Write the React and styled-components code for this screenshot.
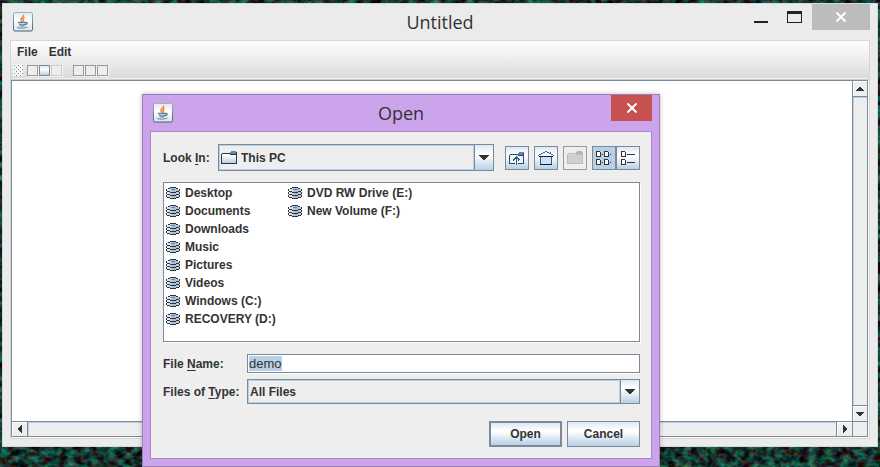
import React, { useEffect, useRef } from "react";
import styled, { createGlobalStyle, css } from "styled-components";

const line = "#7a8a99";
const paleBlue = "#b8cfe5";
const metal = "#eeeeee";
const steel = "linear-gradient(#dde8f3 0%, #ffffff 35%, #ffffff 40%, #b8cfe5 100%)";

const GlobalStyle = createGlobalStyle`
  *, *::before, *::after { box-sizing: border-box; }
  body { margin: 0; background: #12302a; overflow: hidden; }
  button, input, select, textarea { font: inherit; color: inherit; margin: 0; padding: 0; border: 0; border-radius: 0; outline: none; }
  svg { flex: none; }
`;

const Desktop = styled.main`
  position: relative;
  display: flex;
  min-height: 100vh;
  padding: 3px 2px 20px;
  font: bold 12px/18px "Liberation Sans", Arial, sans-serif;
  color: #333333;
`;

const Wallpaper = styled.svg`
  position: absolute;
  inset: 0;
  width: 100%;
  height: 100%;
`;

const AppWindow = styled.section`
  position: relative;
  flex: 1;
  display: flex;
  flex-direction: column;
  padding: 0 7px 7px;
  background: #ebebeb;
  border: 1px solid #d6d6d6;
`;

const DialogWindow = styled.section`
  position: absolute;
  top: 94px;
  left: 142px;
  right: 220px;
  padding: 0 7px 7px;
  background: #cba4ec;
  border: 1px solid #9d7cb9;
  box-shadow: 0 0 5px rgba(0, 0, 0, 0.25);
`;

const TitleBar = styled.header`
  display: grid;
  grid-template-columns: 1fr auto 1fr;
  height: 36px;
`;

const TitleIcon = styled.div`
  display: flex;
  align-items: center;
  padding-left: 3px;
`;

const Title = styled.h1`
  margin: 0;
  font: 400 18px/36px "Open Sans", "Noto Sans", sans-serif;
  color: #333333;
`;

const WindowControls = styled.div`
  display: flex;
  justify-content: flex-end;
  align-items: flex-start;
`;

const CaptionButton = styled.button`
  display: flex;
  align-items: center;
  justify-content: center;
  width: ${(p) => p.$width}px;
  height: 26px;
  background: ${(p) => p.$bg || "transparent"};
`;

const AppContent = styled.div`
  flex: 1;
  display: flex;
  flex-direction: column;
  border: 1px solid #d5d5d5;
  background: #ffffff;
`;

const Bars = styled.div`
  height: 39px;
  background: linear-gradient(#ffffff, #dadada);
  border-bottom: 1px solid #cccccc;
  box-shadow: inset 0 -1px #eeeeee;
`;

const MenuBar = styled.nav`
  display: flex;
  gap: 11px;
  height: 23px;
  padding: 0 6px;
`;

const MenuButton = styled.button`
  background: none;
  height: 22px;
`;

const ToolBar = styled.div`
  display: flex;
  align-items: center;
  gap: 1px;
  padding-left: 2px;
`;

const Grip = styled.svg`
  width: 10px;
  height: 12px;
  margin-right: 3px;
`;

const ToolButton = styled.button`
  width: 11px;
  height: 11px;
  border: 1px solid ${(p) => (p.$active ? line : p.disabled ? "#cccccc" : "#999999")};
  background: ${(p) => (p.$active ? steel : metal)};
  box-shadow: 1px 1px #f4f4f4;
`;

const ToolSeparator = styled.span`
  width: 9px;
`;

const ScrollPane = styled.div`
  flex: 1;
  display: grid;
  grid-template-columns: 1fr 15px;
  grid-template-rows: 1fr 15px;
  margin: 0 1px 1px 0;
  border: 1px solid ${line};
`;

const Editor = styled.textarea`
  width: 100%;
  height: 100%;
  resize: none;
  background: #ffffff;
`;

const ScrollBar = styled.div`
  display: flex;
  background: ${metal};
  ${(p) =>
    p.$vertical
      ? css`flex-direction: column; border-left: 1px solid ${line};`
      : css`border-top: 1px solid ${line};`}
`;

const ScrollThumb = styled.div`
  flex: 1;
  border: 0 solid ${line};
  box-shadow: inset 1px 1px ${paleBlue};
  border-width: ${(p) => (p.$vertical ? "1px 0" : "0 1px")};
`;

const ScrollButton = styled.button`
  display: flex;
  align-items: center;
  justify-content: center;
  width: ${(p) => (p.$vertical ? "14px" : "15px")};
  height: ${(p) => (p.$vertical ? "15px" : "14px")};
  background: ${metal};
  box-shadow: inset 1px 1px #ffffff;
`;

const ScrollCorner = styled.div`
  background: ${metal};
  border-top: 1px solid ${line};
  border-left: 1px solid ${line};
`;

const Chooser = styled.form`
  padding: 12px 11px 11px 12px;
  background: ${metal};
  border: 1px solid #ab86cb;
`;

const LookRow = styled.div`
  display: grid;
  grid-template-columns: 55px 1fr auto;
  align-items: center;
  margin-bottom: 11px;
`;

const Mnemonic = styled.span`
  text-decoration: underline;
  text-underline-offset: 2px;
`;

const Combo = styled.div`
  display: flex;
  align-items: center;
  height: ${(p) => p.$height}px;
  border: 1px solid ${line};
  box-shadow: inset 1px 1px ${paleBlue}, inset 0 -1px ${paleBlue};
`;

const ComboIcon = styled.span`
  display: flex;
  margin-left: 2px;
`;

const ComboSelect = styled.select`
  flex: 1;
  min-width: 0;
  height: 18px;
  padding-left: ${(p) => (p.$wide ? "4px" : "2px")};
  appearance: none;
  background: transparent;
`;

const ComboArrow = styled.span`
  display: flex;
  align-items: center;
  justify-content: center;
  align-self: stretch;
  width: 19px;
  background: ${steel};
  border-left: 1px solid ${line};
  box-shadow: -1px 0 ${paleBlue};
  pointer-events: none;
`;

const Tools = styled.div`
  display: flex;
  gap: 5px;
  margin-left: 11px;
`;

const ToggleGroup = styled.div`
  display: flex;
`;

const IconButton = styled.button`
  display: flex;
  align-items: center;
  justify-content: center;
  width: 24px;
  height: 24px;
  border: 1px solid ${(p) => (p.disabled ? "#999999" : line)};
  background: ${(p) => (p.disabled ? metal : p.$pressed ? paleBlue : steel)};
`;

const FileList = styled.ul`
  display: grid;
  grid-auto-flow: column;
  grid-template-rows: repeat(8, 18px);
  grid-auto-columns: 122px;
  height: 160px;
  margin: 0 0 12px;
  padding: 1px 2px;
  list-style: none;
  background: #ffffff;
  border: 1px solid ${line};
  box-shadow: 1px 1px #ffffff;
`;

const FileItem = styled.li`
  display: flex;
  align-items: center;
  gap: 5px;
  white-space: nowrap;
`;

const FieldRow = styled.div`
  display: grid;
  grid-template-columns: 84px 1fr;
  align-items: center;
  margin-bottom: ${(p) => p.$gap}px;
`;

const NameInput = styled.input`
  width: 100%;
  height: 19px;
  padding: 0 1px;
  font-weight: 400;
  font-size: 13px;
  line-height: 15px;
  background: #ffffff;
  border: 1px solid ${line};
  box-shadow: 0 1px #ffffff;
  &::selection { background: ${paleBlue}; color: #333333; }
`;

const Actions = styled.div`
  display: flex;
  justify-content: flex-end;
  gap: 5px;
`;

const ActionButton = styled.button`
  width: 73px;
  height: 26px;
  background: ${steel};
  border: ${(p) => (p.$primary ? 2 : 1)}px solid ${line};
`;

const JavaIcon = () => (
  <svg width="20" height="20" viewBox="0 0 20 20" aria-hidden="true">
    <defs>
      <linearGradient id="tile" x2="0" y2="1">
        <stop offset="0" stopColor="#e3e9ee" />
        <stop offset="0.4" stopColor="#ffffff" />
        <stop offset="1" stopColor="#dce3e8" />
      </linearGradient>
      <linearGradient id="edge" x2="0" y2="1">
        <stop offset="0" stopColor="#9db3c2" />
        <stop offset="1" stopColor="#3f6274" />
      </linearGradient>
    </defs>
    <rect x="0.5" y="0.5" width="19" height="18.5" rx="1.5" fill="url(#tile)" stroke="url(#edge)" />
    <g fill="none" strokeLinecap="round">
      <path d="M10.500 3.500c1 1.500-3 2.500-2.500 4 .3.800 1 1 1 1.700" stroke="#ee8135" strokeWidth="1.700" />
      <path d="M11.500 6c-1.500.6-1.800 1.200-1 2 .3.400 0 .8-.3 1.200" stroke="#ee8135" strokeWidth="1.200" />
      <path d="M5.500 10.500h7M6.500 12.300c1 .6 4 .6 5.500 0M12.800 10.500c2.400-.3 1.400 1.800-.6 2.200" stroke="#5382a1" strokeWidth="1.300" />
      <path d="M7 14h4M4.500 15c-2 1.300 6 1.700 9.500.2" stroke="#5382a1" strokeWidth="1" />
    </g>
  </svg>
);

const DriveIcon = () => (
  <svg width="14" height="12" viewBox="0 0 14 12" shapeRendering="crispEdges" aria-hidden="true">
    <defs>
      <linearGradient id="disk">
        <stop offset="0" stopColor="#ffffff" />
        <stop offset="0.55" stopColor="#a3b8cc" />
        <stop offset="1" stopColor="#c6d8ea" />
      </linearGradient>
    </defs>
    <path d="M4 0h6v1h2v1h2v8h-2v1h-2v1H4v-1H2v-1H0V2h2V1h2z" fill="url(#disk)" />
    <path d="M4 0h6v1H4zM2 1h2v1H2zM10 1h2v1h-2zM0 2h1v2H0zM13 2h1v2h-1zM1 4h3v1H1zM10 4h3v1h-3zM4 5h6v1H4zM0 5h1v2H0zM13 5h1v2h-1zM1 7h3v1H1zM10 7h3v1h-3zM4 8h6v1H4zM0 8h1v2H0zM13 8h1v2h-1zM1 10h3v1H1zM10 10h3v1h-3zM4 11h6v1H4z" fill="#2d3338" />
    <path d="M5 2h4v1H5z" fill="#6382bf" />
  </svg>
);

const FolderIcon = ({ muted }) => (
  <svg width="16" height="14" viewBox="0 0 16 14" shapeRendering="crispEdges" aria-hidden="true">
    <defs>
      <linearGradient id="folder" x2="0" y2="1">
        <stop offset="0" stopColor="#ffffff" />
        <stop offset="1" stopColor="#b8cfe5" />
      </linearGradient>
    </defs>
    <path d="M1 4h14v8H1z" fill={muted ? "#d0d0d0" : "url(#folder)"} />
    <path d="M1 2h8v1H1zM0 3h1v9H0zM9 3h6v1H9zM15 1h1v11h-1zM0 12h16v1H0z" fill={muted ? "#bbbbbb" : "#333333"} />
    <path d="M1 3h8v1H1z" fill={muted ? "#d8d8d8" : "#ffffff"} />
    <path d="M10 0h5v1h-5zM9 1h6v2H9z" fill={muted ? "#b5b5b5" : "#6382bf"} />
  </svg>
);

const UpFolderIcon = () => (
  <svg width="16" height="14" viewBox="0 0 16 14" shapeRendering="crispEdges" aria-hidden="true">
    <path d="M1 3h13v9H1z" fill="#eef4fa" />
    <path d="M1 3h8v1H1zM0 4h1v8H0zM9 4h5v1H9zM14 2h1v10h-1zM0 12h6v1H0zM9 12h6v1H9z" fill="#2d4a66" />
    <path d="M10 1h5v1h-5zM9 2h5v2H9z" fill="#6382bf" />
    <path d="M7 7h1v6H7z" fill="#4b8db0" />
    <path d="M7 5h1v1h1v1h1v1h1v1h-1v1H9V8H8v6H7V8H6v1H5v1H4V8h1V7h1V6h1z" fill="#25607e" />
  </svg>
);

const HomeIcon = () => (
  <svg width="16" height="14" viewBox="0 0 16 14" shapeRendering="crispEdges" aria-hidden="true">
    <path d="M7 1h2v1h2v1h2v1h2v1H1V4h2V3h2V2h2z" fill="#ffffff" />
    <path d="M7 0h2v1H7zM5 1h2v1H5zM9 1h2v1H9zM3 2h2v1H3zM11 2h1v1h-1zM12 1h1v2h-1zM1 3h2v1H1zM13 3h2v1h-2zM0 4h1v1H0zM15 4h1v1h-1z" fill="#336f96" />
    <path d="M3 6h10v7H3z" fill="#cfdff5" />
    <path d="M2 6h1v7H2zM13 6h1v7h-1z" fill="#28648a" />
    <path d="M1 5h14v1H1zM2 13h12v1H2z" fill="#111d35" />
  </svg>
);

const ListIcon = () => (
  <svg width="16" height="14" viewBox="0 0 16 14" shapeRendering="crispEdges" aria-hidden="true">
    <path d="M.5.500h3l1 1v4h-4zM8.500.500h3l1 1v4h-4zM.5 8.500h3l1 1v4h-4zM8.500 8.500h3l1 1v4h-4z" fill="#ffffff" stroke="#333333" />
    <path d="M6 3h1v1H6zM14 3h1v1h-1zM6 11h1v1H6zM14 11h1v1h-1z" fill="#333333" />
  </svg>
);

const DetailsIcon = () => (
  <svg width="16" height="14" viewBox="0 0 16 14" shapeRendering="crispEdges" aria-hidden="true">
    <path d="M1.500.500h3l1 1v4h-4zM1.500 8.500h3l1 1v4h-4z" fill="#ffffff" stroke="#333333" />
    <path d="M7 3h8v1H7zM7 11h8v1H7z" fill="#333333" />
  </svg>
);

const arrows = {
  up: "M4 0h2v1h1v1h1v1h1v1H1V3h1V2h1V1h1z",
  down: "M0 0h10v1H9v1H8v1H7v1H6v1H4V4H3V3H2V2H1V1H0z",
  smallDown: "M1 0h8v1H8v1H7v1H6v1H4V3H3V2H2V1H1z",
  left: "M3 0h1v8H3V7H2V6H1V5H0V3h1V2h1V1h1z",
  right: "M0 0h1v1h1v1h1v1h1v2H3v1H2v1H1v1H0z",
};

const Arrow = ({ kind }) => {
  const side = kind === "left" || kind === "right";
  const w = side ? 4 : 10;
  const h = side ? 8 : kind === "down" ? 5 : 4;
  return (
    <svg width={w} height={h} viewBox={`0 0 ${w} ${h}`} shapeRendering="crispEdges" aria-hidden="true">
      <path d={arrows[kind]} fill="#333333" />
    </svg>
  );
};

const Cross = () => (
  <svg width="12" height="10" viewBox="0 0 12 10" aria-hidden="true">
    <path d="M1.500.5l9 9M10.500.5l-9 9" stroke="#ffffff" strokeWidth="2" />
  </svg>
);

const places = [
  "Desktop", "Documents", "Downloads", "Music", "Pictures", "Videos",
  "Windows (C:)", "RECOVERY (D:)", "DVD RW Drive (E:)", "New Volume (F:)",
];

function OpenDialog() {
  const nameRef = useRef(null);
  useEffect(() => {
    nameRef.current.focus();
    nameRef.current.select();
  }, []);

  return (
    <DialogWindow role="dialog" aria-labelledby="dialog-title">
      <TitleBar>
        <TitleIcon><JavaIcon /></TitleIcon>
        <Title as="h2" id="dialog-title">Open</Title>
        <WindowControls>
          <CaptionButton $width={41} $bg="#c75050" aria-label="Close dialog"><Cross /></CaptionButton>
        </WindowControls>
      </TitleBar>
      <Chooser onSubmit={(e) => e.preventDefault()}>
        <LookRow>
          <label htmlFor="look-in">Look <Mnemonic>I</Mnemonic>n:</label>
          <Combo $height={27}>
            <ComboIcon><FolderIcon /></ComboIcon>
            <ComboSelect id="look-in" $wide><option>This PC</option></ComboSelect>
            <ComboArrow><Arrow kind="down" /></ComboArrow>
          </Combo>
          <Tools>
            <IconButton type="button" aria-label="Up One Level"><UpFolderIcon /></IconButton>
            <IconButton type="button" aria-label="Home"><HomeIcon /></IconButton>
            <IconButton type="button" aria-label="Create New Folder" disabled><FolderIcon muted /></IconButton>
            <ToggleGroup>
              <IconButton type="button" aria-label="List" aria-pressed="true" $pressed><ListIcon /></IconButton>
              <IconButton type="button" aria-label="Details" aria-pressed="false"><DetailsIcon /></IconButton>
            </ToggleGroup>
          </Tools>
        </LookRow>
        <FileList>
          {places.map((name) => (
            <FileItem key={name}><DriveIcon />{name}</FileItem>
          ))}
        </FileList>
        <FieldRow $gap={6}>
          <label htmlFor="file-name">File <Mnemonic>N</Mnemonic>ame:</label>
          <NameInput id="file-name" ref={nameRef} defaultValue="demo" spellCheck={false} />
        </FieldRow>
        <FieldRow $gap={17}>
          <label htmlFor="file-type">Files of <Mnemonic>T</Mnemonic>ype:</label>
          <Combo $height={25}>
            <ComboSelect id="file-type"><option>All Files</option></ComboSelect>
            <ComboArrow><Arrow kind="down" /></ComboArrow>
          </Combo>
        </FieldRow>
        <Actions>
          <ActionButton $primary>Open</ActionButton>
          <ActionButton type="button">Cancel</ActionButton>
        </Actions>
      </Chooser>
    </DialogWindow>
  );
}

export default function App() {
  return (
    <>
      <GlobalStyle />
      <Desktop>
        <Wallpaper aria-hidden="true">
          <filter id="foliage" x="0" y="0" width="100%" height="100%" colorInterpolationFilters="sRGB">
            <feTurbulence type="fractalNoise" baseFrequency="0.12 0.16" numOctaves="4" seed="7" />
            <feColorMatrix values="0.4 0.1 0 0 -0.16  0 0.9 0 0 -0.24  0 0.6 0.2 0 -0.22  0 0 0 0 1" />
          </filter>
          <rect width="100%" height="100%" filter="url(#foliage)" />
        </Wallpaper>
        <AppWindow>
          <TitleBar>
            <TitleIcon><JavaIcon /></TitleIcon>
            <Title>Untitled</Title>
            <WindowControls>
              <CaptionButton $width={33} aria-label="Minimize">
                <svg width="14" height="14" aria-hidden="true"><path d="M0 11h14v2H0z" fill="#222222" /></svg>
              </CaptionButton>
              <CaptionButton $width={35} aria-label="Maximize">
                <svg width="15" height="12" aria-hidden="true"><path d="M0 0h15v12H0zM1 3v8h13V3z" fill="#222222" fillRule="evenodd" /></svg>
              </CaptionButton>
              <CaptionButton $width={58} $bg="#bcbcbc" aria-label="Close"><Cross /></CaptionButton>
            </WindowControls>
          </TitleBar>
          <AppContent>
            <Bars>
              <MenuBar>
                <MenuButton>File</MenuButton>
                <MenuButton>Edit</MenuButton>
              </MenuBar>
              <ToolBar role="toolbar">
                <Grip shapeRendering="crispEdges" aria-hidden="true">
                  <defs>
                    <pattern id="dots" width="4" height="4" patternUnits="userSpaceOnUse">
                      <path d="M0 0h4v4H0z" fill="#f5f8fa" />
                      <path d="M1 1h1v1H1zM3 3h1v1H3z" fill={line} />
                    </pattern>
                  </defs>
                  <rect width="10" height="12" fill="url(#dots)" />
                </Grip>
                <ToolButton aria-label="New" />
                <ToolButton aria-label="Open" $active />
                <ToolButton aria-label="Save" disabled />
                <ToolSeparator />
                <ToolButton aria-label="Cut" />
                <ToolButton aria-label="Copy" />
                <ToolButton aria-label="Paste" />
              </ToolBar>
            </Bars>
            <ScrollPane>
              <Editor aria-label="Document" />
              <ScrollBar $vertical>
                <ScrollButton $vertical aria-label="Scroll up"><Arrow kind="up" /></ScrollButton>
                <ScrollThumb $vertical />
                <ScrollButton $vertical aria-label="Scroll down"><Arrow kind="smallDown" /></ScrollButton>
              </ScrollBar>
              <ScrollBar>
                <ScrollButton aria-label="Scroll left"><Arrow kind="left" /></ScrollButton>
                <ScrollThumb />
                <ScrollButton aria-label="Scroll right"><Arrow kind="right" /></ScrollButton>
              </ScrollBar>
              <ScrollCorner />
            </ScrollPane>
          </AppContent>
        </AppWindow>
        <OpenDialog />
      </Desktop>
    </>
  );
}
